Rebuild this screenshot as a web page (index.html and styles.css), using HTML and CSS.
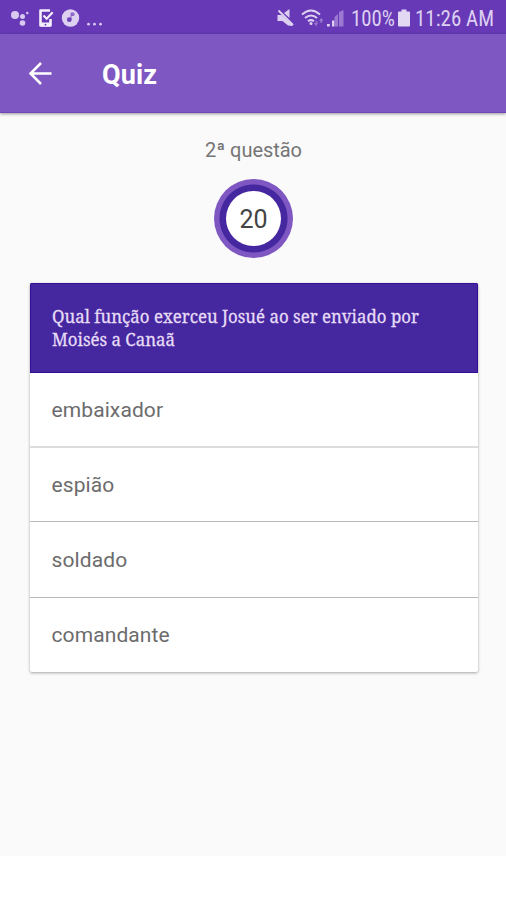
FILE: index.html
```html
<!DOCTYPE html>
<html lang="pt">
<head>
<meta charset="utf-8">
<title>Quiz</title>
<link rel="stylesheet" href="styles.css">
</head>
<body>
<div class="screen">
  <div class="status">
    <svg class="notifications" width="110" height="34" viewBox="0 0 110 34">
      <g fill="#d9c9f0"><circle cx="15" cy="15" r="4"/><circle cx="22.500" cy="16.500" r="2.500"/><circle cx="27.300" cy="13" r="1.300"/><circle cx="22.500" cy="23" r="2.800"/></g>
      <path d="M50 10.500H40.500v15h10v-6.500" fill="none" stroke="#f5effc" stroke-width="2.600" stroke-linejoin="round"/>
      <path d="M40 22.500h11v3l-1 1h-9l-1-1z" fill="#f5effc"/>
      <path d="M43.500 15.500l3.200 3.200 6-6.500" fill="none" stroke="#f5effc" stroke-width="2.200"/>
      <circle cx="45.500" cy="24.700" r=".9" fill="#6739b6"/>
      <circle cx="70.500" cy="18" r="8.700" fill="#ddd0f1"/>
      <path d="M71 19.500v-6.500h3v2.500h-3" fill="#8d68cb" stroke="#8d68cb" stroke-width="1"/><circle cx="69.300" cy="19.700" r="2.400" fill="#6d42b8"/>
      <g fill="#d9c9f0"><circle cx="88.500" cy="24.200" r="1.400"/><circle cx="94.500" cy="24.200" r="1.400"/><circle cx="100.500" cy="24.200" r="1.400"/></g>
    </svg>
    <svg class="system" width="234" height="34" viewBox="272 0 234 34">
      <path d="M277.500 15h4l11 9.500v1.500l-4.500-.500-5.500-4.500h-5zM284 13l5.500-4v9z" fill="#ddd0f1"/>
      <path d="M278.500 10.500l14.500 14.500" stroke="#ddd0f1" stroke-width="2" fill="none"/>
      <g fill="none" stroke="#ddd0f1" stroke-width="2"><path d="M302 14.500q9-8 18 0"/><path d="M305 18q6-5 12 0"/><path d="M308 21.300q3-2.400 6 0"/></g>
      <circle cx="311" cy="23.600" r="1.500" fill="#ddd0f1"/>
      <path d="M314 23h4l-2 3.200zM315 22.500l1.500-2 1.500 2zM319 21l2.200-3.200 2.200 3.200zM320.500 21h1.500v2h-1.500z" fill="#9b78d2"/>
      <path d="M327 24h2.800v2.500H327zM332 20.500h2.500v6H332z" fill="#ddd0f1"/>
      <path d="M334.500 17l3.500-3v12.500h-3.500zM339 12l4.500-2v16.500H339z" fill="#9b78d2"/>
      <text x="351" y="26" textLength="44" lengthAdjust="spacingAndGlyphs">100%</text>
      <path d="M401.500 9.500h5v2h2.500a1 1 0 0 1 1 1v13a1 1 0 0 1-1 1h-10a1 1 0 0 1-1-1v-13a1 1 0 0 1 1-1h2.500z" fill="#e3d8f4"/>
      <text x="415" y="26" textLength="79" lengthAdjust="spacingAndGlyphs">11:26 AM</text>
    </svg>
  </div>
  <header class="appbar">
    <svg width="24" height="24" viewBox="0 0 24 24"><path d="M23.500 12.500H2.500M13 2L2.500 12.500 13 23" fill="none" stroke="#fff" stroke-width="2.500"/></svg>
    <h1>Quiz</h1>
  </header>
  <main>
    <p class="count">2ª questão</p>
    <div class="timer"><span>20</span></div>
    <section class="card">
      <div class="question"><p>Qual função exerceu Josué ao ser enviado por<br>Moisés a Canaã</p></div>
      <div class="option soft">embaixador</div>
      <div class="option second">espião</div>
      <div class="option third">soldado</div>
      <div class="option last">comandante</div>
    </section>
  </main>
</div>
</body>
</html>
```
FILE: styles.css
```css
* { box-sizing: border-box; }
body { margin: 0; height: 900px; background: #fff; font-family: Roboto, sans-serif; overflow: hidden; }
.screen { height: 856px; background: #fafafa; }
.status { height: 34px; background: #6739b6; display: flex; justify-content: space-between; }
.status svg { display: block; }
.system text { font-family: "Roboto Condensed", Roboto, sans-serif; font-size: 21.5px; fill: #ddd0f1; }
.appbar { height: 79px; display: flex; align-items: center; padding-left: 28px; background: #7e57c2; border-bottom: 1px solid #6f45b8; box-shadow: 0 1px 3px rgba(0,0,0,.4); }
.appbar h1 { margin: 3px 0 0 50px; font-size: 27px; line-height: 32px; font-weight: 700; color: #fff; letter-spacing: .1px; }
main { display: flex; flex-direction: column; align-items: center; padding-top: 24px; }
.count { margin: 0 0 0 1px; font-size: 20px; line-height: 26px; color: #757575; letter-spacing: -.05px; }
.timer { width: 79px; height: 79px; margin: 16px 0 0 1px; padding: 12px; border-radius: 50%; background: radial-gradient(circle closest-side, #4527a0 33.500px, #7e57c2 34.500px); }
.timer span { display: flex; align-items: center; justify-content: center; width: 55px; height: 55px; border-radius: 50%; background: #fff; font-size: 25px; color: #444; padding-top: 2px; }
.card { width: 448px; height: 389px; margin: 25px 0 0 1px; border-radius: 2px; background: #fff; box-shadow: 0 1px 3px rgba(0,0,0,.35); overflow: hidden; }
.question { height: 90px; padding: 22px 0 0 22px; background: #4527a0; box-shadow: inset 0 0 0 1px #350d96; }
.question p { width: max-content; margin: 0; color: #e6dcf6; font-family: "Noto Serif", "DejaVu Serif Condensed", serif; font-size: 18px; line-height: 23px; white-space: nowrap; transform: scaleX(.936); transform-origin: left; -webkit-text-stroke: .3px #e6dcf6; }
.option { height: 75px; padding-left: 22px; line-height: 75px; font-size: 21px; color: #6c6c6c; letter-spacing: .1px; border-bottom: 1px solid #b8b8b8; }
.soft { border-bottom: 2px solid #dcdcdc; }
.second { height: 74px; }
.third { height: 76px; line-height: 77px; }
.last { border-bottom: 0; }
```
